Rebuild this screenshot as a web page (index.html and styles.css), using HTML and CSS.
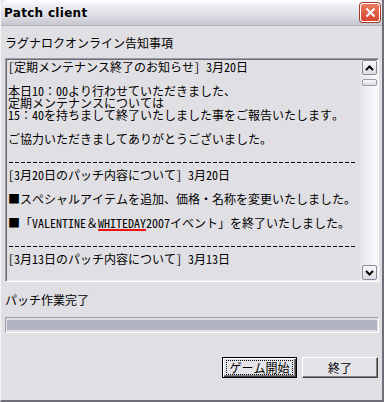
FILE: index.html
```html
<!DOCTYPE html>
<html lang="ja">
<head>
    <meta charset="UTF-8">
    <meta name="viewport" content="width=device-width, initial-scale=1.0">
    <title>Patch client</title>
    <link rel="stylesheet" href="styles.css">
</head>
<body>
    <div class="window">
        <header class="titlebar">
            <h1 class="title">Patch client</h1>
            <div class="close-btn">
                <svg width="11" height="11" viewBox="0 0 11 11"><path d="M1.5 1.5 L9.5 9.5 M9.5 1.5 L1.5 9.5" stroke="#fff" stroke-width="2" fill="none"/></svg>
            </div>
        </header>

        <div class="content">
            <div class="label notice-label">ラグナロクオンライン告知事項</div>

            <div class="notice-box">
                <div class="notice-text">
                    <div class="line">[定期メンテナンス終了のお知らせ] 3月20日</div>
                    <div class="line"></div>
                    <div class="line">本日10：00より行わせていただきました、</div>
                    <div class="line">定期メンテナンスについては</div>
                    <div class="line">15：40を持ちまして終了いたしました事をご報告いたします。</div>
                    <div class="line"></div>
                    <div class="line">ご協力いただきましてありがとうございました。</div>
                    <div class="line"></div>
                    <div class="line dash"></div>
                    <div class="line">[3月20日のパッチ内容について] 3月20日</div>
                    <div class="line"></div>
                    <div class="line">■スペシャルアイテムを追加、価格・名称を変更いたしました。</div>
                    <div class="line"></div>
                    <div class="line">■「VALENTINE＆<span class="mark">WHITEDAY</span>2007イベント」を終了いたしました。</div>
                    <div class="line"></div>
                    <div class="line dash"></div>
                    <div class="line">[3月13日のパッチ内容について] 3月13日</div>
                </div>
                <!-- scrollbar -->
                <div class="scrollbar">
                    <div class="scroll-btn">
                        <svg width="9" height="6" viewBox="0 0 9 6"><path d="M1 5 L4.5 1.5 L8 5" stroke="#000" stroke-width="2" fill="none"/></svg>
                    </div>
                    <div class="scroll-thumb"></div>
                    <div class="scroll-track"></div>
                    <div class="scroll-btn">
                        <svg width="9" height="6" viewBox="0 0 9 6"><path d="M1 1 L4.5 4.5 L8 1" stroke="#000" stroke-width="2" fill="none"/></svg>
                    </div>
                </div>
            </div>

            <div class="label status-label">パッチ作業完了</div>
            <div class="progress"><div class="progress-fill"></div></div>

            <div class="buttons">
                <button class="btn btn-default"><span class="focus">ゲーム開始</span></button>
                <button class="btn">終了</button>
            </div>
        </div>
    </div>
</body>
</html>
```

FILE: styles.css
```css
* {
    box-sizing: border-box;
}

body {
    margin: 0;
    background: #e0dfe3;
    font-family: "Noto Sans Mono CJK JP", "Noto Sans CJK JP", sans-serif;
    font-size: 12px;
    color: #000;
}

.window {
    width: 384px;
    height: 402px;
    display: flex;
    flex-direction: column;
    background: #e0dfe3;
    border-left: 1px solid #f4f4f6;
    border-right: 2px solid #6e6e7a;
    border-bottom: 2px solid #6e6e7a;
}

.titlebar {
    height: 26px;
    display: flex;
    align-items: center;
    justify-content: space-between;
    padding: 0 2px 0 3px;
    background: linear-gradient(180deg, #ffffff 0%, #ececf2 25%, #dcdce4 65%, #c6c6d0 100%);
    border-bottom: 1px solid #b0b0bc;
    border-radius: 6px 6px 0 0;
}

.title {
    margin: 0;
    font-family: "DejaVu Sans", sans-serif;
    font-size: 12px;
    font-weight: bold;
    letter-spacing: 0.3px;
}

.close-btn {
    width: 20px;
    height: 19px;
    display: flex;
    align-items: center;
    justify-content: center;
    background: linear-gradient(180deg, #e87a62, #d8432c);
    border: 1px solid #fff;
    border-radius: 3px;
    box-shadow: 0 0 0 1px #a63a2a;
}

.content {
    flex: 1;
    display: flex;
    flex-direction: column;
    padding: 0 3px 0 4px;
}

.label {
    height: 14px;
    line-height: 14px;
}

.notice-label {
    margin-top: 10px;
}

.notice-box {
    margin-top: 8px;
    height: 224px;
    display: flex;
    padding: 1px;
    border: 1px solid;
    border-color: #9c9ca8 #fff #fff #9c9ca8;
    box-shadow: inset 1px 1px #6c6c76, inset -1px -1px #ececf0;
}

.notice-text {
    flex: 1;
    padding: 1px 0 0 1px;
}

.line {
    height: 12px;
    line-height: 12px;
    white-space: pre;
}

.dash {
    background: repeating-linear-gradient(90deg, transparent 0 1px, #000 1px 5px, transparent 5px 6px) no-repeat 0 5px / 348px 1px;
}

.mark {
    text-decoration: underline 2px #ee1111;
    text-underline-offset: 1px;
}

.scrollbar {
    width: 17px;
    display: flex;
    flex-direction: column;
    padding-left: 2px;
    background: linear-gradient(90deg, #e4e4ea, #fbfbfd);
}

.scroll-btn {
    height: 15px;
    display: flex;
    align-items: center;
    justify-content: center;
    background: linear-gradient(180deg, #f8f8fa, #dcdce4);
    border: 1px solid #8c8c98;
    border-radius: 2px;
}

.scroll-thumb {
    height: 7px;
    margin-top: 4px;
    background: linear-gradient(180deg, #fafafc, #dadae2);
    border: 1px solid #9a9aa6;
    border-radius: 2px;
}

.scroll-track {
    flex: 1;
}

.status-label {
    margin-top: 11px;
}

.progress {
    margin-top: 10px;
    height: 16px;
    padding: 2px 1px;
    border: 1px solid;
    border-color: #a0a0aa #fff #fff #a0a0aa;
}

.progress-fill {
    height: 100%;
    background: #b2b4c4;
}

.buttons {
    margin-top: 24px;
    display: flex;
    justify-content: flex-end;
    gap: 5px;
    padding-right: 1px;
}

.btn {
    width: 76px;
    height: 21px;
    padding: 0;
    font: inherit;
    color: #000;
    background: #e4e3e8;
    border: 1px solid;
    border-color: #fff #404040 #404040 #fff;
    box-shadow: inset -1px -1px #808080;
}

.btn-default {
    width: 75px;
    border: 1px solid #000;
    box-shadow: inset 1px 1px #fff, inset -1px -1px #404040, inset -2px -2px #808080;
}

.focus {
    display: inline-block;
    line-height: 13px;
    padding: 0 2px;
    border: 1px dotted #000;
}
```
